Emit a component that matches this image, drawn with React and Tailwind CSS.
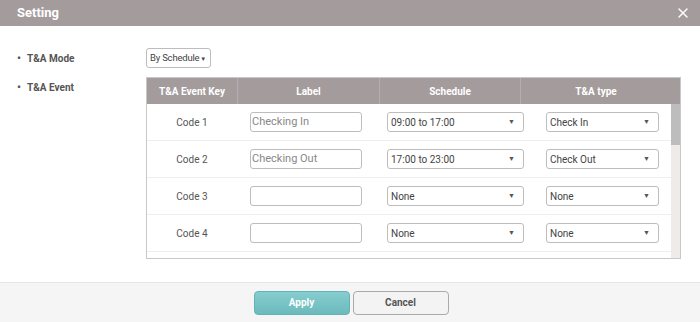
import { X } from 'lucide-react'

const rows = [
  { code: 'Code 1', label: 'Checking In', schedule: '09:00 to 17:00', type: 'Check In' },
  { code: 'Code 2', label: 'Checking Out', schedule: '17:00 to 23:00', type: 'Check Out' },
  { code: 'Code 3', label: '', schedule: 'None', type: 'None' },
  { code: 'Code 4', label: '', schedule: 'None', type: 'None' },
]

function Select({ value, width }) {
  return (
    <div className={`flex h-[20px] items-center justify-between rounded-[3px] border border-[#bdbdbd] bg-white pl-[3px] pr-[8px] text-[10px] text-[#444] ${width}`}>
      <span>{value}</span>
      <span className="text-[7px] text-[#555]">▼</span>
    </div>
  )
}

export default function App() {
  return (
    <div className="h-[322px] w-[700px] overflow-hidden bg-white font-['Roboto',sans-serif]">
      {/* Header */}
      <div className="flex h-[26px] items-center justify-between bg-[#a49b9d] pl-[17px] pr-[9px]">
        <span className="text-[13px] font-bold text-white">Setting</span>
        <X size={16} strokeWidth={2} className="text-white" />
      </div>

      {/* Body */}
      <div className="h-[256px] pt-[22px]">
        <div className="flex items-center">
          <div className="flex w-[146px] items-center pl-[17px] text-[10px] font-bold text-[#555]">
            <span className="w-[10px] text-[11px] leading-none">•</span>
            <span>T&amp;A Mode</span>
          </div>
          <div className="flex h-[20px] w-[65px] items-center justify-between whitespace-nowrap rounded-[3px] border border-[#bdbdbd] pl-[3px] pr-[4px] text-[9.5px] tracking-[-0.2px] text-[#444]">
            <span>By Schedule</span>
            <span className="text-[6px]">▼</span>
          </div>
        </div>

        <div className="mt-[9px] flex items-start">
          <div className="flex h-[20px] w-[146px] items-center pl-[17px] text-[10px] font-bold text-[#555]">
            <span className="w-[10px] text-[11px] leading-none">•</span>
            <span>T&amp;A Event</span>
          </div>

          {/* Table */}
          <div className="w-[535px] border border-[#c8c8c8]">
            <div className="flex h-[26px] items-center bg-[#a49b9d] text-[10px] font-bold text-white">
              <div className="flex h-full w-[90px] items-center justify-center">T&amp;A Event Key</div>
              <div className="flex h-full w-[142px] items-center justify-center border-l border-[#b5adaf]">Label</div>
              <div className="flex h-full w-[141px] items-center justify-center border-l border-[#b5adaf]">Schedule</div>
              <div className="flex h-full flex-1 items-center justify-center border-l border-[#b5adaf] pr-[9px]">T&amp;A type</div>
            </div>
            <div className="relative h-[154px] overflow-hidden">
              {rows.map(r => (
                <div key={r.code} className="flex h-[37px] items-center border-b border-[#eeeeee] pr-[9px] text-[10px] text-[#555]">
                  <div className="w-[90px] text-center">{r.code}</div>
                  <div className="w-[142px] pl-[13px]">
                    <div className="flex h-[20px] w-[112px] items-center rounded-[3px] border border-[#bdbdbd] pl-[1px] text-[11px] text-[#888]">
                      {r.label}
                    </div>
                  </div>
                  <div className="w-[141px] pl-[8px]">
                    <Select value={r.schedule} width="w-[137px]" />
                  </div>
                  <div className="flex-1 pl-[26px]">
                    <Select value={r.type} width="w-[113px]" />
                  </div>
                </div>
              ))}
              <div className="absolute right-0 top-0 h-full w-[9px] bg-[#efebe9]">
                <div className="h-[41px] bg-[#bdbdbd]" />
              </div>
            </div>
          </div>
        </div>
      </div>

      {/* Footer */}
      <div className="flex h-[40px] items-center justify-center gap-[3px] border-t border-[#e6e6e6] bg-[#f5f5f5] pl-[2px]">
        <button className="h-[24px] w-[96px] rounded-[4px] border border-[#62b3b5] bg-gradient-to-b from-[#86cdcf] to-[#6cbabc] text-[10px] font-bold text-white">
          Apply
        </button>
        <button className="h-[24px] w-[96px] rounded-[4px] border border-[#aaaaaa] bg-[#f3f3f3] text-[10px] font-bold text-[#555]">
          Cancel
        </button>
      </div>
    </div>
  )
}
